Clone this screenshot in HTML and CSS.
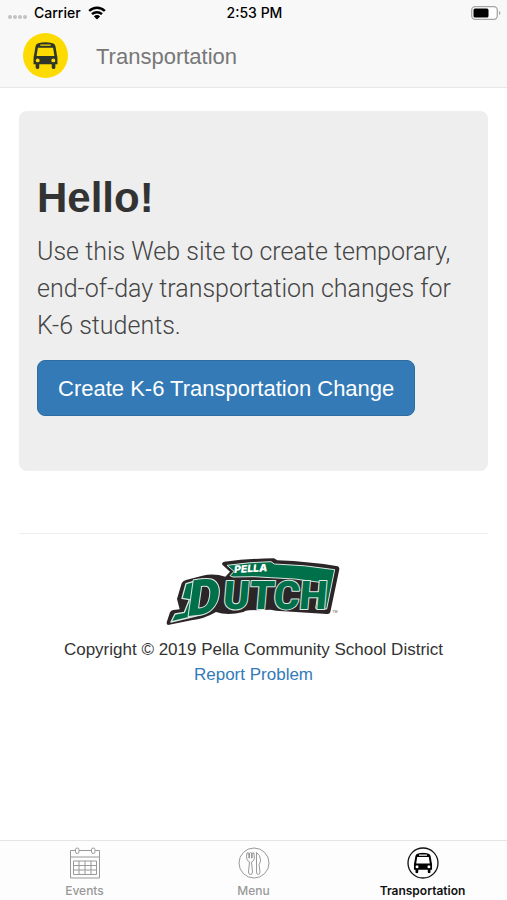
FILE: index.html
```html
<!DOCTYPE html>
<html lang="en">
<head>
<meta charset="utf-8">
<meta name="viewport" content="width=device-width, initial-scale=1">
<title>Transportation</title>
<link rel="stylesheet" href="styles.css">
</head>
<body>
<svg class="defs" aria-hidden="true">
  <symbol id="bus" viewBox="0 0 24 26">
    <path fill-rule="evenodd" d="M5 1.2Q12-.8 19 1.2Q21 1.8 21.6 4L23 12.500Q23.500 14 23.500 16V21.500H21.500V24.500Q21.500 26 19.800 26T18 24.500V21.500H6V24.500Q6 26 4.200 26T2.500 24.500V21.500H.5V16Q.5 14 1 12.500L2.400 4Q3 1.800 5 1.200ZM7 2.300V3.700H17V2.300ZM4.700 5.500L3.400 13.500H20.600L19.300 5.500ZM4.500 15.800A1.900 1.900 0 1 0 4.500 19.600A1.900 1.900 0 1 0 4.500 15.800ZM19.500 15.800A1.900 1.900 0 1 0 19.500 19.600A1.900 1.900 0 1 0 19.500 15.800Z"/>
  </symbol>
</svg>
<header class="top">
  <div class="status">
    <div class="carrier">
      <span class="dots"><i></i><i></i><i></i><i></i></span>
      <span>Carrier</span>
      <svg class="wifi" viewBox="0 0 18 14" aria-hidden="true">
        <path d="M1.200 5A11 11 0 0 1 16.800 5M4 8.200A7.200 7.200 0 0 1 14 8.200" fill="none" stroke="#000" stroke-width="2.400"/>
        <path d="M9 13.500L5.900 10.400A4.400 4.400 0 0 1 12.100 10.400Z"/>
      </svg>
    </div>
    <time>2:53 PM</time>
    <svg class="battery" viewBox="0 0 30 14" aria-hidden="true">
      <rect x=".7" y=".7" width="25.600" height="12.600" rx="3.500" fill="#fff" stroke="#a5a5a5" stroke-width="1.300"/>
      <rect x="2.500" y="2.500" width="15" height="9" rx="1.500"/>
      <path d="M28 5Q31 7 28 9Z" fill="#a5a5a5"/>
    </svg>
  </div>
  <nav class="brand">
    <span class="badge"><svg viewBox="0 0 24 26" aria-hidden="true"><use href="#bus"/></svg></span>
    <a href="#">Transportation</a>
  </nav>
</header>
<main>
  <section class="hero">
    <h1>Hello!</h1>
    <p>Use this Web site to create temporary, end-of-day transportation changes for K-6 students.</p>
    <button type="button">Create K-6 Transportation Change</button>
  </section>
  <footer>
    <svg class="logo" viewBox="0 0 600 270" role="img" aria-label="Pella Dutch">
      <path d="M42 240Q36 238 39 229L48 202Q51 196 58 195L77 193L69 162L83 115Q86 107 96 105L145 92Q180 84 214 95L228 80L205 59Q202 52 211 50Q290 40 360 40L370 46Q470 50 551 64Q557 66 556 73L529 201Q527 208 519 207L366 197L350 194L285 196Q275 196 268 201Q220 213 186 201Q150 222 112 226Z" fill="#2b2528"/>
      <path d="M219 61Q290 51 351 50L361 57Q450 59 542 74L518 192L485 190L497 112Q420 99 350 98L300 95L237 96L228 92L240 79Z" fill="#00704a" stroke="#dce8e1" stroke-width="3" stroke-linejoin="round"/>
      <path d="M51 231L63 207L91 202L106 164L84 160L96 116L134 105L124 190L150 207Z" fill="#00704a" stroke="#dce8e1" stroke-width="4" stroke-linejoin="round"/>
      <text class="word initial" transform="translate(96 214) rotate(-6) skewX(-14)">D</text>
      <text class="word" transform="translate(205 191) skewX(-5)">UTCH</text>
      <text class="small" x="241" y="84" transform="rotate(-3 241 84)">PELLA</text>
      <text class="tm" x="535" y="203">TM</text>
    </svg>
    <p>Copyright © 2019 Pella Community School District</p>
    <a href="#">Report Problem</a>
  </footer>
</main>
<nav class="tabs">
  <a href="#">
    <svg viewBox="0 0 32 32" fill="none" stroke="currentColor" aria-hidden="true">
      <path d="M6 3.500H1.500V31H30.500V3.500H26.500M10 3.500H22M1.500 10H30.500M4.500 14H27.500V27.500H4.500ZM4.500 18.500H27.500M4.500 23H27.500M10 14V27.500M16 14V27.500M22 14V27.500"/>
      <rect x="6.500" y="1" width="3.500" height="5.500" rx="1.750"/><rect x="22.500" y="1" width="3.500" height="5.500" rx="1.750"/>
    </svg>
    <span>Events</span>
  </a>
  <a href="#">
    <svg viewBox="0 0 32 32" fill="none" stroke="currentColor" aria-hidden="true">
      <circle cx="16" cy="16" r="15"/>
      <path d="M9 6Q8 10 9 12.500Q10 14.500 11.500 15L10.500 25Q10.500 27.500 12.500 27.500T14.500 25L13.500 15Q16 14 16.300 11.500Q16.500 9 15.800 6Q14.500 5 14.200 7V11H13.500V6Q12.500 5 11.500 6V11H10.800V7Q10.500 5 9 6ZM18.500 5.500Q22.500 8 22.500 13Q22.500 16 21 17.500L22 25Q22 27.500 20.300 27.500T18.500 25Z"/>
    </svg>
    <span>Menu</span>
  </a>
  <a href="#" class="active" aria-current="page">
    <svg viewBox="0 0 32 32" aria-hidden="true">
      <circle cx="16" cy="16" r="15" fill="none" stroke="currentColor" stroke-width="1.300"/>
      <use href="#bus" x="6.500" y="5.500" width="19" height="21"/>
    </svg>
    <span>Transportation</span>
  </a>
</nav>
</body>
</html>
```
FILE: styles.css
```css
* { box-sizing: border-box; }
body {
  margin: 0;
  min-height: 100vh;
  display: flex;
  flex-direction: column;
  background: #fff;
  color: #333;
  font-family: "Liberation Sans", Arial, sans-serif;
  font-size: 17px;
  line-height: 25px;
}
a { color: #337ab7; text-decoration: none; }
.defs { position: absolute; width: 0; height: 0; }
.top {
  background: #f8f8f8;
  border-bottom: 1px solid #e7e7e7;
}
.status {
  display: grid;
  grid-template-columns: 1fr auto 1fr;
  align-items: center;
  height: 26px;
  padding: 0 6px 0 8px;
  color: #000;
  font: 500 14px/26px Inter, sans-serif;
}
.carrier { display: flex; align-items: center; gap: 7px; }
.dots { display: flex; gap: 1px; padding-top: 8px; }
.dots i { width: 4px; height: 4px; border-radius: 50%; background: #c2c2c2; }
.wifi { width: 18px; height: 14px; }
.battery { width: 30px; height: 14px; justify-self: end; }
.brand {
  display: flex;
  align-items: center;
  gap: 28px;
  height: 61px;
  padding: 0 23px;
}
.brand a { color: #777; font-size: 22px; }
.badge {
  display: grid;
  place-items: center;
  width: 45px;
  height: 45px;
  margin-bottom: 2px;
  border-radius: 50%;
  background: #fedb00;
}
.badge svg { width: 25px; height: 27px; fill: #2e3529; }
main { flex: 1; padding: 23px 19px 0; }
.hero {
  padding: 60px 18px 55px;
  border-radius: 8px;
  background: #eee;
}
h1 {
  margin: 0 0 9px;
  font-size: 42px;
  line-height: 53px;
}
.hero p {
  margin: 0 0 16px;
  padding-right: 16px;
  color: #444;
  font: 300 25px/37px Roboto, sans-serif;
}
button {
  height: 56px;
  padding: 2px 20px 0;
  border: 1px solid #2e6da4;
  border-radius: 8px;
  background: #337ab7;
  color: #fff;
  font: 22px "Liberation Sans", Arial, sans-serif;
}
footer {
  margin-top: 62px;
  padding-top: 11px;
  border-top: 1px solid #eee;
  text-align: center;
}
footer p { margin: 0; }
.logo { display: block; width: 200px; height: 90px; margin: 0 auto 2px; }
.word {
  fill: #00704a;
  stroke: #dce8e1;
  stroke-width: 6px;
  stroke-linejoin: round;
  paint-order: stroke;
  font: 900 118px Roboto, sans-serif;
}
.initial { font-size: 148px; }
.small { fill: #fff; font: italic 900 31px Inter, sans-serif; }
.tm { fill: #555; font-size: 11px; }
.tabs {
  display: grid;
  grid-template-columns: repeat(3, 1fr);
  height: 60px;
  border-top: 1px solid #e5e5e5;
  background: #fdfdfd;
}
.tabs a {
  display: flex;
  flex-direction: column;
  align-items: center;
  gap: 3px;
  padding-top: 6px;
  color: #999;
  font: 500 12px/18px Inter, sans-serif;
}
.tabs svg { width: 32px; height: 32px; }
.tabs .active { color: #111; font-weight: 600; }
```
